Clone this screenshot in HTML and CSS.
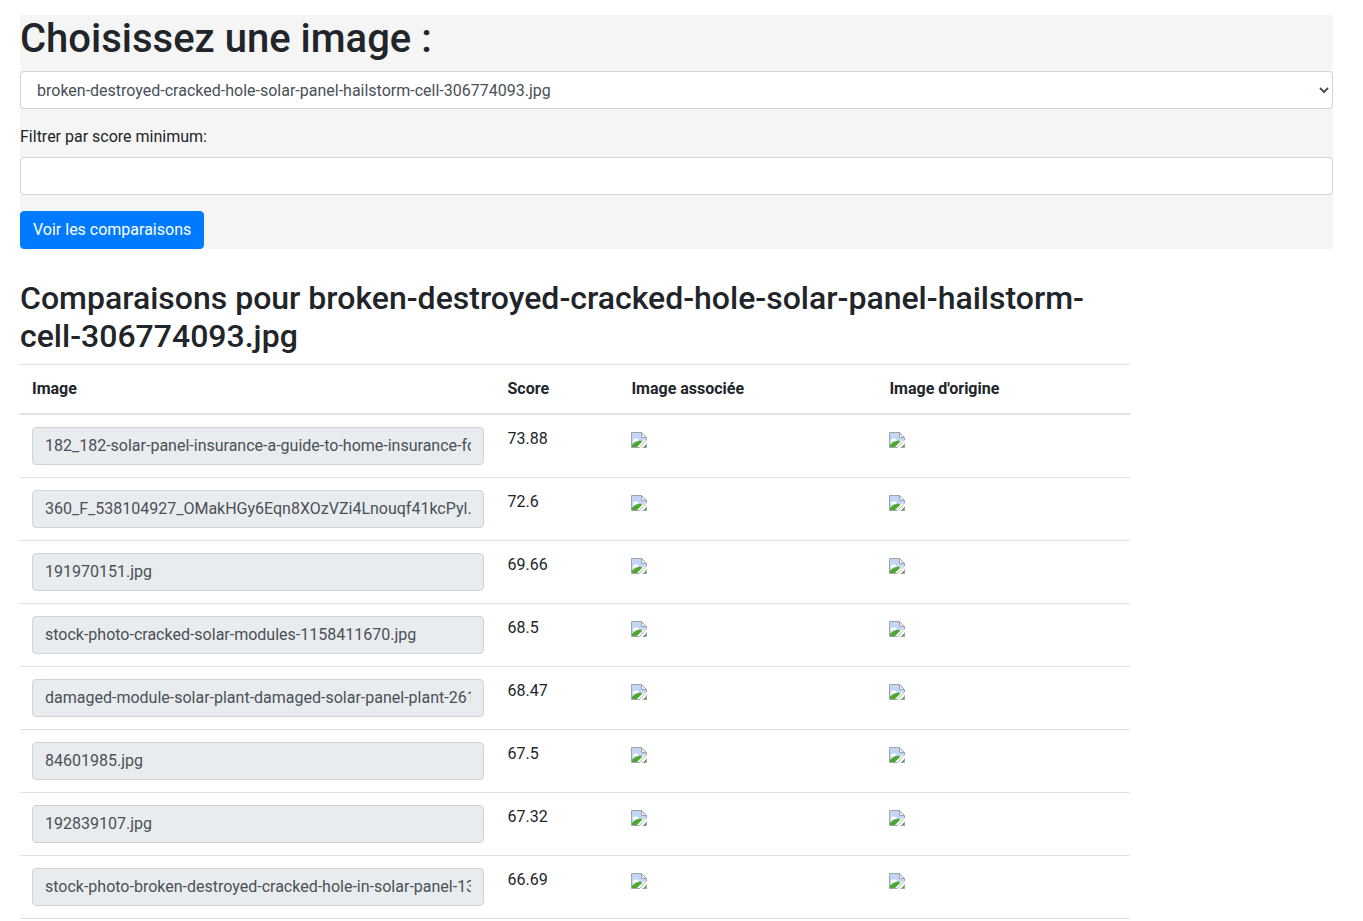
FILE: index.html
```html
<!DOCTYPE html>
<html lang="fr">
<head>
    <meta charset="UTF-8">
    <meta name="viewport" content="width=device-width, initial-scale=1.0">
    <title>Comparaisons</title>
    <link rel="stylesheet" href="styles.css">
</head>
<body>
    <svg class="icon-defs" width="0" height="0" aria-hidden="true">
        <symbol id="broken-img" viewBox="0 0 16 16">
            <path d="M0.5 0.5H10.5L15.5 5.5V8L8.5 15.5H0.5Z" fill="#fff" stroke="#9ea3ad"/>
            <path d="M1 1H10V6H15V8L12 9L8 9L1 12Z" fill="#c3d6f3"/>
            <path d="M2 8Q3 6 5 6.5Q7 6 8 8.5L2 10Z" fill="#fff"/>
            <path d="M1 15V12.5Q5 9 9 8.5L11.5 9.5L6 15Z" fill="#4ea72e"/>
            <path d="M10.5 0.5V5.5H15.5Z" fill="#eceef1" stroke="#9ea3ad"/>
            <path d="M16 8L8.5 16H16Z" fill="#fff"/>
            <path d="M11.5 16L16 11.5V15.5H11.5Z" fill="#4ea72e"/>
            <path d="M15.5 11.5V15.5H11.5" fill="none" stroke="#9ea3ad"/>
        </symbol>
    </svg>

    <form class="picker">
        <h1>Choisissez une image :</h1>
        <div class="form-group">
            <select class="form-control">
                <option>broken-destroyed-cracked-hole-solar-panel-hailstorm-cell-306774093.jpg</option>
            </select>
        </div>
        <div class="form-group">
            <label for="min-score">Filtrer par score minimum:</label>
            <input type="text" id="min-score" class="form-control">
        </div>
        <button type="button" class="btn">Voir les comparaisons</button>
    </form>

    <div class="results">
        <h2>Comparaisons pour broken-destroyed-cracked-hole-solar-panel-hailstorm-cell-306774093.jpg</h2>
        <table class="table">
            <thead>
                <tr>
                    <th class="col-name">Image</th>
                    <th class="col-score">Score</th>
                    <th class="col-assoc">Image associée</th>
                    <th class="col-orig">Image d'origine</th>
                </tr>
            </thead>
            <tbody>
                <tr>
                    <td><input class="form-control" readonly value="182_182-solar-panel-insurance-a-guide-to-home-insurance-for-solar-panels.jpg"></td>
                    <td>73.88</td>
                    <td><svg class="broken"><use href="#broken-img"/></svg></td>
                    <td><svg class="broken"><use href="#broken-img"/></svg></td>
                </tr>
                <tr>
                    <td><input class="form-control" readonly value="360_F_538104927_OMakHGy6Eqn8XOzVZi4Lnouqf41kcPyl.jpg"></td>
                    <td>72.6</td>
                    <td><svg class="broken"><use href="#broken-img"/></svg></td>
                    <td><svg class="broken"><use href="#broken-img"/></svg></td>
                </tr>
                <tr>
                    <td><input class="form-control" readonly value="191970151.jpg"></td>
                    <td>69.66</td>
                    <td><svg class="broken"><use href="#broken-img"/></svg></td>
                    <td><svg class="broken"><use href="#broken-img"/></svg></td>
                </tr>
                <tr>
                    <td><input class="form-control" readonly value="stock-photo-cracked-solar-modules-1158411670.jpg"></td>
                    <td>68.5</td>
                    <td><svg class="broken"><use href="#broken-img"/></svg></td>
                    <td><svg class="broken"><use href="#broken-img"/></svg></td>
                </tr>
                <tr>
                    <td><input class="form-control" readonly value="damaged-module-solar-plant-damaged-solar-panel-plant-261234567.jpg"></td>
                    <td>68.47</td>
                    <td><svg class="broken"><use href="#broken-img"/></svg></td>
                    <td><svg class="broken"><use href="#broken-img"/></svg></td>
                </tr>
                <tr>
                    <td><input class="form-control" readonly value="84601985.jpg"></td>
                    <td>67.5</td>
                    <td><svg class="broken"><use href="#broken-img"/></svg></td>
                    <td><svg class="broken"><use href="#broken-img"/></svg></td>
                </tr>
                <tr>
                    <td><input class="form-control" readonly value="192839107.jpg"></td>
                    <td>67.32</td>
                    <td><svg class="broken"><use href="#broken-img"/></svg></td>
                    <td><svg class="broken"><use href="#broken-img"/></svg></td>
                </tr>
                <tr>
                    <td><input class="form-control" readonly value="stock-photo-broken-destroyed-cracked-hole-in-solar-panel-1312345678.jpg"></td>
                    <td>66.69</td>
                    <td><svg class="broken"><use href="#broken-img"/></svg></td>
                    <td><svg class="broken"><use href="#broken-img"/></svg></td>
                </tr>
            </tbody>
        </table>
    </div>
</body>
</html>
```

FILE: styles.css
```css
* {
    box-sizing: border-box;
}
body {
    margin: 0;
    padding: 15px 30px 0 20px;
    font-family: Roboto, "Liberation Sans", sans-serif;
    font-size: 16px;
    line-height: 1.5;
    color: #212529;
    background-color: #fff;
}
.icon-defs {
    position: absolute;
}
h1, h2 {
    margin: 0 0 8px;
    font-weight: 500;
    line-height: 1.2;
}
h1 {
    font-size: 40px;
}
h2 {
    font-size: 32px;
}
.picker {
    background-color: #f5f5f5;
}
.form-group {
    margin-bottom: 16px;
}
label {
    display: inline-block;
    margin-bottom: 8px;
}
.form-control {
    display: block;
    width: 100%;
    height: 38px;
    padding: 6px 12px;
    font-family: inherit;
    font-size: 16px;
    line-height: 1.5;
    color: #495057;
    background-color: #fff;
    border: 1px solid #ced4da;
    border-radius: 4px;
}
.form-control[readonly] {
    background-color: #e9ecef;
}
.btn {
    display: block;
    height: 38px;
    padding: 6px 12px;
    font-family: inherit;
    font-size: 16px;
    line-height: 1.5;
    color: #fff;
    background-color: #007bff;
    border: 1px solid #007bff;
    border-radius: 4px;
}
.results {
    width: 1110px;
    padding-top: 30px;
}
.table {
    width: 100%;
    table-layout: fixed;
    border-collapse: collapse;
}
.table th, .table td {
    padding: 12px;
    text-align: left;
    vertical-align: top;
    border-top: 1px solid #dee2e6;
}
.table th {
    font-weight: 700;
    vertical-align: bottom;
    border-bottom: 2px solid #dee2e6;
}
.table tbody tr:last-child td {
    border-bottom: 1px solid #dee2e6;
}
.col-name {
    width: 475.5px;
}
.col-score {
    width: 123.9px;
}
.col-assoc {
    width: 258.05px;
}
.broken {
    display: inline-block;
    width: 16px;
    height: 16px;
    vertical-align: -4px;
}
```
